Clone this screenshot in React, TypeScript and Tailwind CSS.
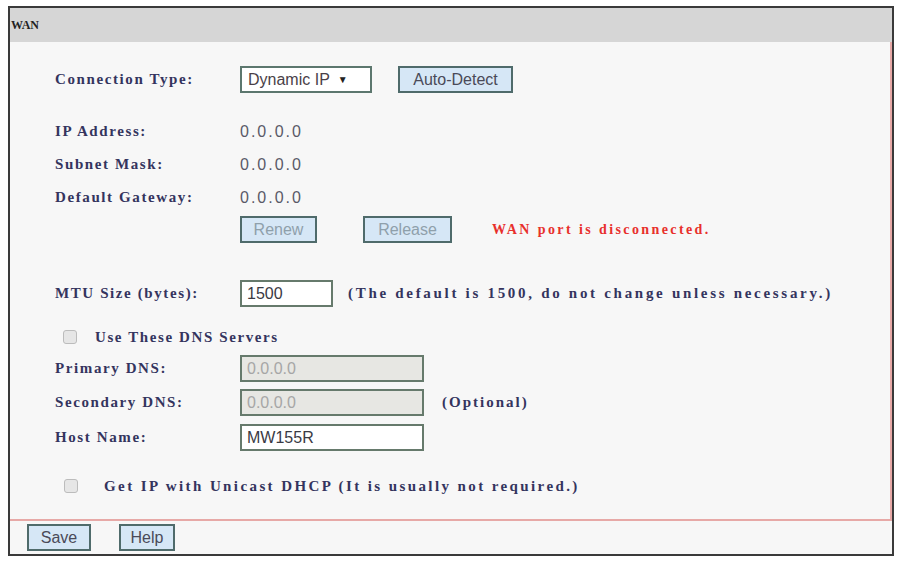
import React from "react";

const serif = "font-['Liberation_Serif',serif] text-[15px] font-bold text-[#34345e]";
const mono = serif + " tracking-[1.6px]";
const sans = "font-['Liberation_Sans',Arial,sans-serif] text-[16px]";

function Btn({ children, disabled, className = "" }: { children: React.ReactNode; disabled?: boolean; className?: string }) {
  return (
    <button
      type="button"
      className={
        "flex h-[27px] items-center justify-center border-2 border-[#4f6b6b] bg-[#d6e7f6] " +
        sans +
        (disabled ? " text-[#8fa0ab]" : " text-[#4a4a58]") +
        " " +
        className
      }
    >
      {children}
    </button>
  );
}

function Field({ value, gray, className = "" }: { value: string; gray?: boolean; className?: string }) {
  return (
    <div
      className={
        "flex h-[27px] items-center border-2 border-[#667a6c] pl-[5px] " +
        sans +
        (gray ? " bg-[#e7e7e3] text-[#a6a6a6]" : " bg-white text-[#3a3a44]") +
        " " +
        className
      }
    >
      {value}
    </div>
  );
}

function Box() {
  return <span className="inline-block h-[14px] w-[14px] rounded-[3px] border border-[#bcbcbc] bg-[#e6e6e6]" />;
}

function Row({ label, children, className = "" }: { label: string; children?: React.ReactNode; className?: string }) {
  return (
    <div className={"flex items-center pl-[45px] " + className}>
      <span className={"w-[185px] shrink-0 " + mono}>{label}</span>
      {children}
    </div>
  );
}

export default function App() {
  return (
    <div className="h-[565px] w-[898px] bg-white pl-[8px] pt-[6px]">
      <div className="flex h-[550px] w-[886px] flex-col border-2 border-[#3a3a3a] bg-[#f7f7f7]">
        <div className="flex h-[34px] items-center bg-[#d6d6d6] pl-[1px] font-['Liberation_Serif',serif] text-[12px] font-bold text-[#222]">
          WAN
        </div>
        <div className="flex flex-1 flex-col border-b-2 border-r-2 border-[#e7a9a7]">
          <Row label="Connection Type:" className="mt-[24px] h-[27px]">
            <div className={"flex h-[27px] w-[132px] items-center border-2 border-[#5c776e] bg-white pl-[6px] text-[#4a3f48] " + sans}>
              Dynamic IP
              <span className="ml-[8px] text-[10px] text-[#222]">▼</span>
            </div>
            <Btn className="ml-[26px] w-[115px]">Auto-Detect</Btn>
          </Row>
          <Row label="IP Address:" className="mt-[22px] h-[33px]">
            <span className={sans + " tracking-[2px] text-[#5a5a68]"}>0.0.0.0</span>
          </Row>
          <Row label="Subnet Mask:" className="h-[33px]">
            <span className={sans + " tracking-[2px] text-[#5a5a68]"}>0.0.0.0</span>
          </Row>
          <Row label="Default Gateway:" className="h-[33px]">
            <span className={sans + " tracking-[2px] text-[#5a5a68]"}>0.0.0.0</span>
          </Row>
          <Row label="" className="mt-[2px] h-[27px]">
            <Btn disabled className="w-[77px]">Renew</Btn>
            <Btn disabled className="ml-[46px] w-[89px]">Release</Btn>
            <span className="ml-[40px] font-['Liberation_Serif',serif] text-[14px] font-bold tracking-[2.4px] text-[#e8302c]">
              WAN port is disconnected.
            </span>
          </Row>
          <Row label="MTU Size (bytes):" className="mt-[37px] h-[27px]">
            <Field value="1500" className="w-[93px]" />
            <span className={"ml-[15px] tracking-[2.7px] " + serif}>(The default is 1500, do not change unless necessary.)</span>
          </Row>
          <div className="mt-[17px] flex h-[26px] items-center pl-[53px]">
            <Box />
            <span className={"ml-[18px] " + mono}>Use These DNS Servers</span>
          </div>
          <Row label="Primary DNS:" className="mt-[5px] h-[27px]">
            <Field value="0.0.0.0" gray className="w-[184px]" />
          </Row>
          <Row label="Secondary DNS:" className="mt-[7px] h-[27px]">
            <Field value="0.0.0.0" gray className="w-[184px]" />
            <span className={"ml-[18px] tracking-[2px] " + serif}>(Optional)</span>
          </Row>
          <Row label="Host Name:" className="mt-[8px] h-[27px]">
            <Field value="MW155R" className="w-[184px]" />
          </Row>
          <div className="mt-[22px] flex h-[26px] items-center pl-[54px]">
            <Box />
            <span className={"ml-[26px] tracking-[2.4px] " + serif}>Get IP with Unicast DHCP (It is usually not required.)</span>
          </div>
        </div>
        <div className="flex h-[33px] items-center gap-[28px] pl-[17px]">
          <Btn className="h-[25px] w-[64px]">Save</Btn>
          <Btn className="h-[25px] w-[56px]">Help</Btn>
        </div>
      </div>
    </div>
  );
}
